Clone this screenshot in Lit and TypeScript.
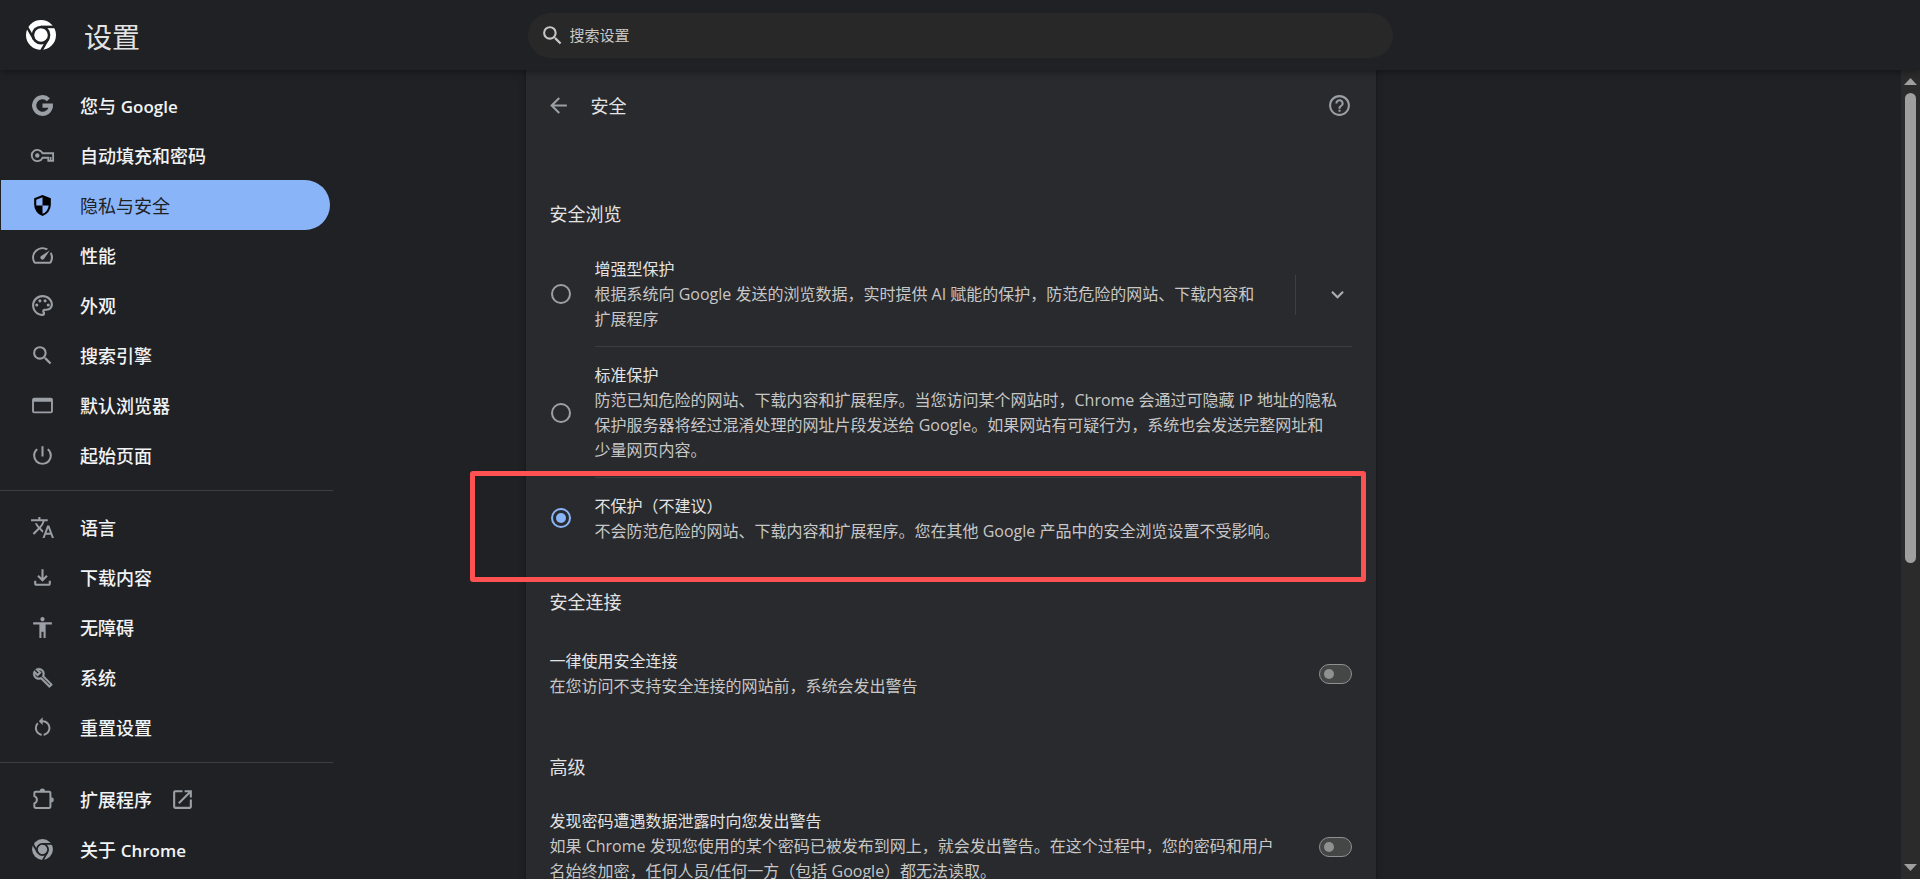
import { LitElement, html, svg, css } from "lit";
import type { SVGTemplateResult } from "lit";
import { customElement, property, state } from "lit/decorators.js";
import { classMap } from "lit/directives/class-map.js";

const chromeMark = svg`
  <circle cx="12" cy="12" r="10"></circle>
  <g fill="none" stroke="#202124" stroke-width="1.7">
    <circle cx="12" cy="12" r="5.4"></circle>
    <path d="M12 6.6h10"></path>
    <path d="M12 6.6h10" transform="rotate(120 12 12)"></path>
    <path d="M12 6.6h10" transform="rotate(240 12 12)"></path>
  </g>`;

const ICONS: Record<string, SVGTemplateResult> = {
  chrome: chromeMark,
  google: svg`<path fill="none" stroke="currentColor" stroke-width="4" d="M17.7 6.4A8 8 0 1 0 20 12.2M12 12.1h10"></path>`,
  key: svg`<path fill="none" stroke="currentColor" stroke-width="1.8" d="M12 9.8A5.4 5.4 0 1 0 12 14.2H16.3V13.6V14.2H17.6V17.2H22.2V9.8z"></path><circle cx="7" cy="12" r="2.1"></circle><path d="M19 13.4h1.6v3.8H19z"></path>`,
  shield: svg`<path d="M12 22q-3.475-.875-5.738-3.988T4 11.1V5l8-3 8 3v6.1q0 3.8-2.262 6.913T12 22m0-2.1q2.425-.75 4.05-2.963T17.95 12H12V4.125l-6 2.25v5.175q0 .175.05.45H12z"></path>`,
  speed: svg`<path d="m20.38 8.57-1.23 1.85a8 8 0 0 1-.22 7.58H5.07A8 8 0 0 1 15.58 6.85l1.85-1.23A10 10 0 0 0 3.35 19a2 2 0 0 0 1.72 1h13.85a2 2 0 0 0 1.74-1 10 10 0 0 0-.27-10.44zM10.59 15.41a2 2 0 0 0 2.83 0l5.66-8.49-8.49 5.66a2 2 0 0 0 0 2.83z"></path>`,
  palette: svg`<path d="M12 22C6.49 22 2 17.51 2 12S6.49 2 12 2s10 4.04 10 9c0 3.31-2.69 6-6 6h-1.77c-.28 0-.5.22-.5.5 0 .12.05.23.13.33.41.47.64 1.06.64 1.67A2.5 2.5 0 0 1 12 22zm0-18c-4.41 0-8 3.59-8 8s3.59 8 8 8c.28 0 .5-.22.5-.5a.54.54 0 0 0-.14-.35c-.41-.46-.63-1.05-.63-1.65a2.5 2.5 0 0 1 2.5-2.5H16c2.21 0 4-1.79 4-4 0-3.86-3.59-7-8-7z"></path><circle cx="6.5" cy="11.5" r="1.5"></circle><circle cx="9.5" cy="7.5" r="1.5"></circle><circle cx="14.5" cy="7.5" r="1.5"></circle><circle cx="17.5" cy="11.5" r="1.5"></circle>`,
  search: svg`<path d="M15.5 14h-.79l-.28-.27A6.471 6.471 0 0 0 16 9.5 6.5 6.5 0 1 0 9.5 16c1.61 0 3.09-.59 4.23-1.57l.27.28v.79l5 4.99L20.49 19l-4.99-5zm-6 0C7.01 14 5 11.99 5 9.5S7.01 5 9.5 5 14 7.01 14 9.5 11.99 14 9.5 14z"></path>`,
  browser: svg`<path fill-rule="evenodd" d="M4 4.5h16a2 2 0 0 1 2 2v11a2 2 0 0 1-2 2H4a2 2 0 0 1-2-2v-11a2 2 0 0 1 2-2zM3.8 8.3v9.4h16.4V8.3z"></path>`,
  power: svg`<path d="M13 3h-2v10h2V3zm4.83 2.17-1.42 1.42A6.92 6.92 0 0 1 19 12c0 3.87-3.13 7-7 7s-7-3.13-7-7c0-2.19 1.01-4.14 2.58-5.42L6.17 5.17A8.932 8.932 0 0 0 3 12a9 9 0 0 0 18 0c0-2.74-1.23-5.18-3.17-6.83z"></path>`,
  translate: svg`<path d="M12.87 15.07l-2.54-2.51.03-.03A17.52 17.52 0 0 0 14.07 6H17V4h-7V2H8v2H1v1.99h11.17C11.5 7.92 10.44 9.75 9 11.35 8.07 10.32 7.3 9.19 6.69 8h-2c.73 1.63 1.73 3.17 2.98 4.56l-5.09 5.02L4 19l5-5 3.11 3.11.76-2.04zM18.5 10h-2L12 22h2l1.12-3h4.75L21 22h2l-4.5-12zm-2.62 7l1.62-4.33L19.12 17h-3.24z"></path>`,
  download: svg`<path d="M12 16l-5-5 1.4-1.45 2.6 2.6V4h2v8.15l2.6-2.6L17 11l-5 5zm-6 4q-.825 0-1.412-.587T4 18v-3h2v3h12v-3h2v3q0 .825-.587 1.413T18 20z"></path>`,
  accessibility: svg`<path d="M12 2c1.1 0 2 .9 2 2s-.9 2-2 2-2-.9-2-2 .9-2 2-2zm9 7h-6v13h-2v-6h-2v6H9V9H3V7h18v2z"></path>`,
  wrench: svg`<path transform="translate(2.2 2.2) scale(.84)" stroke="currentColor" stroke-width=".5" d="M22.61 18.99l-9.08-9.08c.93-2.34.45-5.1-1.44-7C9.79.61 6.21.4 3.66 2.26L7.5 6.11 6.08 7.52 2.25 3.69C.39 6.23.6 9.82 2.9 12.11c1.86 1.86 4.57 2.35 6.89 1.48l9.11 9.11c.39.39 1.02.39 1.41 0l2.3-2.3c.4-.38.4-1.01 0-1.41zm-3 1.6l-9.46-9.46c-.61.45-1.29.72-2 .82-1.36.2-2.79-.21-3.83-1.25C3.37 9.76 2.93 8.5 3 7.26l3.09 3.09 4.24-4.24-3.09-3.09c1.24-.07 2.49.37 3.44 1.31 1.08 1.08 1.49 2.57 1.24 3.96-.12.71-.42 1.37-.88 1.96l9.45 9.45-.88.89z"></path>`,
  reset: svg`<path transform="translate(1 .4) scale(.93)" d="M12 5V2L8 6l4 4V7c3.31 0 6 2.69 6 6 0 2.97-2.17 5.43-5 5.91v2.02c3.95-.49 7-3.85 7-7.93 0-4.42-3.58-8-8-8zm-6 8c0-1.65.67-3.15 1.76-4.24L6.34 7.34A8.014 8.014 0 0 0 4 13c0 4.08 3.05 7.44 7 7.93v-2.02c-2.83-.48-5-2.94-5-5.91z"></path>`,
  extension: svg`<path fill="none" stroke="currentColor" stroke-width="1.9" d="M4.2 8.8V5.7a1.2 1.2 0 0 1 1.2-1.2h13a1.2 1.2 0 0 1 1.2 1.2v13.2a1.2 1.2 0 0 1-1.2 1.2h-13a1.2 1.2 0 0 1-1.2-1.2v-3.1c3.2-1.2 3.2-5.8 0-7z"></path><path d="M9.4 3.9a2.5 2.5 0 0 1 5 0zM20.3 9.8a2.5 2.5 0 0 1 0 5z"></path>`,
  launch: svg`<path d="M19 19H5V5h7V3H5a2 2 0 0 0-2 2v14a2 2 0 0 0 2 2h14c1.1 0 2-.9 2-2v-7h-2v7zM14 3v2h3.59l-9.83 9.83 1.41 1.41L19 6.41V10h2V3h-7z"></path>`,
  help: svg`<path d="M11 18h2v-2h-2v2zm1-16C6.48 2 2 6.48 2 12s4.48 10 10 10 10-4.48 10-10S17.52 2 12 2zm0 18c-4.41 0-8-3.59-8-8s3.59-8 8-8 8 3.59 8 8-3.59 8-8 8zm0-14c-2.21 0-4 1.79-4 4h2c0-1.1.9-2 2-2s2 .9 2 2c0 2-3 1.75-3 5h2c0-2.25 3-2.5 3-5 0-2.21-1.79-4-4-4z"></path>`,
  back: svg`<path d="M20 11H7.83l5.59-5.59L12 4l-8 8 8 8 1.41-1.41L7.83 13H20v-2z"></path>`,
  chevron: svg`<path d="M7.41 8.59 12 13.17l4.59-4.58L18 10l-6 6-6-6z"></path>`,
};

@customElement("ui-icon")
class UiIcon extends LitElement {
  @property() name = "";
  @property() box = "0 0 24 24";
  static styles = css`
    :host { display: block; width: 25px; height: 25px; flex: none; }
    svg { display: block; width: 100%; height: 100%; fill: currentColor; }
  `;
  render() {
    return html`<svg viewBox=${this.box} aria-hidden="true">${ICONS[this.name]}</svg>`;
  }
}

interface NavItem { icon: string; label: string; product?: string; external?: boolean }

const NAV: NavItem[][] = [
  [
    { icon: "google", label: "您与 ", product: "Google" },
    { icon: "key", label: "自动填充和密码" },
    { icon: "shield", label: "隐私与安全" },
    { icon: "speed", label: "性能" },
    { icon: "palette", label: "外观" },
    { icon: "search", label: "搜索引擎" },
    { icon: "browser", label: "默认浏览器" },
    { icon: "power", label: "起始页面" },
  ],
  [
    { icon: "translate", label: "语言" },
    { icon: "download", label: "下载内容" },
    { icon: "accessibility", label: "无障碍" },
    { icon: "wrench", label: "系统" },
    { icon: "reset", label: "重置设置" },
  ],
  [
    { icon: "extension", label: "扩展程序", external: true },
    { icon: "chrome", label: "关于 ", product: "Chrome" },
  ],
];

// \u2060 (word joiner) keeps 少量 together at the end of a line.
const LEVELS = [
  {
    id: "enhanced", title: "增强型保护", expandable: true,
    text: "根据系统向 Google 发送的浏览数据，实时提供 AI 赋能的保护，防范危险的网站、下载内容和扩展程序",
  },
  {
    id: "standard", title: "标准保护",
    text: "防范已知危险的网站、下载内容和扩展程序。当您访问某个网站时，Chrome 会通过可隐藏 IP 地址的隐私保护服务器将经过混淆处理的网址片段发送给 Google。如果网站有可疑行为，系统也会发送完整网址和少\u2060量网页内容。",
  },
  {
    id: "none", title: "不保护（不建议）", marked: true,
    text: "不会防范危险的网站、下载内容和扩展程序。您在其他 Google 产品中的安全浏览设置不受影响。",
  },
];

@customElement("app-root")
class AppRoot extends LitElement {
  @state() private current = "shield";
  @state() private level = "none";

  static styles = css`
    :host {
      display: flex;
      flex-direction: column;
      height: 100vh;
      overflow: hidden;
      background: #202124;
      color: #e3e3e3;
      font: 16px/25px "Open Sans", "Noto Sans CJK SC", sans-serif;
    }
    * { box-sizing: border-box; }
    h1, h2, h3, p { margin: 0; font-weight: 400; }
    button { padding: 0; border: 0; background: none; color: inherit; font: inherit; cursor: pointer; }

    .top {
      position: relative;
      z-index: 1;
      display: grid;
      grid-template-columns: 1fr minmax(0, 865px) 1fr;
      align-items: center;
      height: 70px;
      flex: none;
      background: #202124;
      box-shadow: 0 1px 8px rgba(0, 0, 0, 0.45);
    }
    .brand { display: flex; align-items: center; gap: 28px; padding-left: 26px; }
    .brand ui-icon { width: 30px; height: 30px; color: #fff; }
    .brand h1 { padding-top: 4px; font-size: 28px; line-height: 40px; color: #e3e3e3; }
    .search {
      display: flex;
      align-items: center;
      gap: 5px;
      height: 45px;
      padding: 0 12px;
      border-radius: 23px;
      background: #282828;
      color: #c7c7c7;
    }
    .search input {
      flex: 1;
      min-width: 0;
      padding: 0;
      border: 0;
      outline: 0;
      background: none;
      color: inherit;
      font: inherit;
      font-size: 15px;
    }
    .search input::placeholder { color: #c7c7c7; opacity: 1; }

    .body { display: flex; flex: 1; min-height: 0; }
    .columns {
      display: grid;
      grid-template-columns: minmax(333px, 1fr) minmax(0, 850px) minmax(0, 1fr);
      flex: 1;
      overflow: hidden;
    }

    .menu { width: 333px; padding-top: 10px; }
    .menu hr { height: 1px; margin: 10px 0 11px; border: 0; background: #3c4043; }
    .item {
      display: flex;
      align-items: center;
      gap: 25px;
      height: 50px;
      margin: 0 3px 0 1px;
      padding-left: 29px;
      border-radius: 0 25px 25px 0;
      color: #f1f3f4;
      font-size: 18px;
      font-weight: 500;
      text-decoration: none;
    }
    .item ui-icon { color: #9aa0a6; }
    .label { padding-top: 2px; white-space: pre; }
    .label b { font-size: 17px; font-weight: 600; }
    .item .launch { margin-left: -7px; }
    .item.selected { background: #8ab4f8; color: #202124; font-weight: 400; }
    .item.selected ui-icon { color: #000; }

    .card {
      padding: 0 24px;
      background: #292a2d;
      box-shadow: 0 1px 2px rgba(0, 0, 0, 0.3), 0 2px 6px 2px rgba(0, 0, 0, 0.15);
    }
    .head { display: flex; align-items: center; gap: 20px; height: 70px; margin-bottom: 30px; color: #9aa0a6; }
    .head button { margin-left: -4px; }
    .head h2 { flex: 1; padding-top: 2px; color: #e3e3e3; font-size: 18px; }
    .section { padding: 31px 0 14px; font-size: 18px; line-height: 26px; }

    .choice { position: relative; display: flex; align-items: center; gap: 24px; padding-left: 1px; }
    .choice .main {
      display: flex;
      align-items: center;
      flex: 1;
      padding: 16px 0 14px;
      border-bottom: 1px solid #3c3d40;
    }
    .choice.last .main { border-bottom: 0; }
    .copy { flex: 1; }
    .copy h3 { font-size: 16px; line-height: 25px; font-weight: 400; }
    .copy p { color: #c7c7c7; }
    .copy label { display: block; }
    input[type="radio"] {
      display: grid;
      place-items: center;
      appearance: none;
      flex: none;
      width: 20px;
      height: 20px;
      margin: 0;
      border: 2px solid #9aa0a6;
      border-radius: 50%;
    }
    input[type="radio"]:checked { border-color: #8ab4f8; }
    input[type="radio"]:checked::before {
      content: "";
      width: 10px;
      height: 10px;
      border-radius: 50%;
      background: #8ab4f8;
    }
    .expand {
      display: grid;
      place-items: center;
      width: 57px;
      height: 40px;
      margin-left: 28px;
      padding-left: 28px;
      border-left: 1px solid #3c4043;
      color: #aaaeb2;
    }
    .mark {
      position: absolute;
      inset: -7px -14px -24px -80px;
      border: 5px solid #fe5151;
      border-radius: 3px;
      pointer-events: none;
    }

    .row { display: flex; align-items: center; gap: 36px; min-height: 94px; padding: 15px 0 19px; }
    .row input {
      display: flex;
      align-items: center;
      appearance: none;
      flex: none;
      width: 33px;
      height: 20px;
      margin: 0;
      padding-left: 4px;
      border: 1px solid #8e918f;
      border-radius: 10px;
      background: #444746;
    }
    .row input::before {
      content: "";
      width: 10px;
      height: 10px;
      border-radius: 50%;
      background: #8e918f;
    }
    .row input:checked::before { margin-left: 13px; }

    .scroll {
      display: flex;
      flex-direction: column;
      align-items: center;
      width: 19px;
      flex: none;
      padding: 8px 0;
      background: #2b2b2b;
      color: #9f9f9f;
    }
    .scroll svg { display: block; flex: none; width: 13px; height: 7px; fill: currentColor; }
    .track { flex: 1; width: 11px; margin: 8px 0; }
    .thumb { border-radius: 6px; background: currentColor; }
  `;

  private renderItem(item: NavItem) {
    return html`
      <a href="#" class=${classMap({ item: true, selected: item.icon === this.current })}
        @click=${(e: Event) => { e.preventDefault(); this.current = item.icon; }}>
        <ui-icon name=${item.icon}></ui-icon>
        <span class="label">${item.label}${item.product ? html`<b>${item.product}</b>` : ""}</span>
        ${item.external ? html`<ui-icon class="launch" name="launch"></ui-icon>` : ""}
      </a>`;
  }

  private renderLevel(level: (typeof LEVELS)[number]) {
    return html`
      <div class=${classMap({ choice: true, last: !!level.marked })}>
        <input type="radio" name="level" id=${level.id} .checked=${level.id === this.level}
          @change=${() => (this.level = level.id)} />
        <div class="main">
          <div class="copy">
            <label for=${level.id}><h3>${level.title}</h3><p>${level.text}</p></label>
          </div>
          ${level.expandable
            ? html`<button class="expand" aria-label="展开"><ui-icon name="chevron"></ui-icon></button>`
            : ""}
        </div>
        ${level.marked ? html`<div class="mark"></div>` : ""}
      </div>`;
  }

  private renderToggle(id: string, title: string, text: string) {
    return html`
      <div class="row">
        <div class="copy"><label for=${id}><h3>${title}</h3><p>${text}</p></label></div>
        <input type="checkbox" role="switch" id=${id} />
      </div>`;
  }

  render() {
    return html`
      <header class="top">
        <div class="brand">
          <ui-icon name="chrome" box="2 2 20 20"></ui-icon>
          <h1>设置</h1>
        </div>
        <label class="search">
          <ui-icon name="search"></ui-icon>
          <input type="search" placeholder="搜索设置" aria-label="搜索设置" />
        </label>
      </header>
      <div class="body">
        <div class="columns">
          <nav class="menu">
            ${NAV.map((group, i) => html`${i ? html`<hr />` : ""}${group.map((n) => this.renderItem(n))}`)}
          </nav>
          <main class="card">
            <div class="head">
              <button aria-label="返回"><ui-icon name="back"></ui-icon></button>
              <h2>安全</h2>
              <ui-icon name="help"></ui-icon>
            </div>
            <h2 class="section">安全浏览</h2>
            ${LEVELS.map((l) => this.renderLevel(l))}
            <h2 class="section">安全连接</h2>
            ${this.renderToggle("https", "一律使用安全连接", "在您访问不支持安全连接的网站前，系统会发出警告")}
            <h2 class="section">高级</h2>
            ${this.renderToggle("leak", "发现密码遭遇数据泄露时向您发出警告",
              "如果 Chrome 发现您使用的某个密码已被发布到网上，就会发出警告。在这个过程中，您的密码和用户名始终加密，任何人员/任何一方（包括 Google）都无法读取。")}
          </main>
        </div>
        <div class="scroll" aria-hidden="true">
          <svg viewBox="0 0 13 7"><path d="M6.5 0 13 7H0z"></path></svg>
          <div class="track"><div class="thumb" style="height:${(470 / 763) * 100}%"></div></div>
          <svg viewBox="0 0 13 7"><path d="M0 0h13L6.500 7z"></path></svg>
        </div>
      </div>`;
  }
}
